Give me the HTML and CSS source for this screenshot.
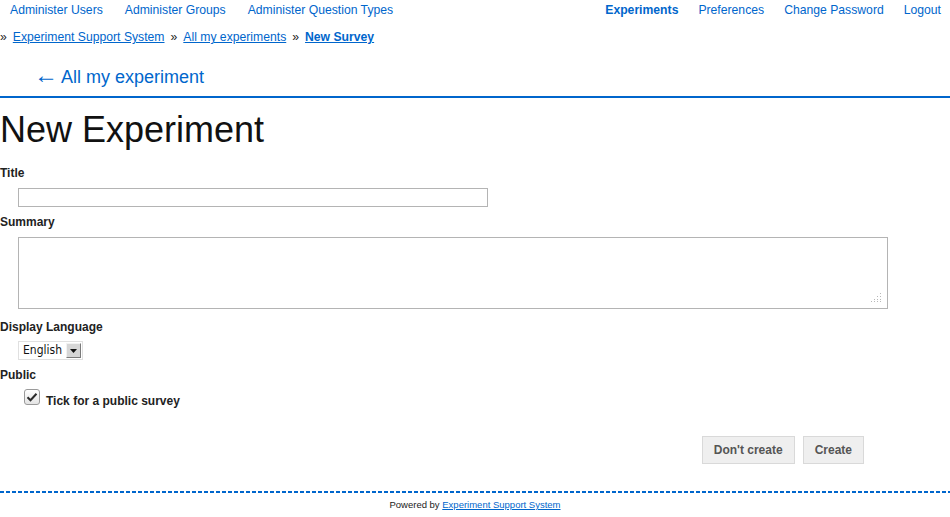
FILE: index.html
```html
<!DOCTYPE html>
<html lang="en">
<head>
<meta charset="utf-8">
<title>New Experiment</title>
<link rel="stylesheet" href="styles.css">
</head>
<body>
<header class="topnav">
  <nav class="nav-left">
    <a href="#">Administer Users</a>
    <a href="#">Administer Groups</a>
    <a href="#">Administer Question Types</a>
  </nav>
  <nav class="nav-right">
    <a href="#" class="current">Experiments</a>
    <a href="#">Preferences</a>
    <a href="#">Change Password</a>
    <a href="#">Logout</a>
  </nav>
</header>
<div class="crumbs">
  <span class="sep">»</span><a href="#">Experiment Support System</a>
  <span class="sep">»</span><a href="#">All my experiments</a>
  <span class="sep">»</span><a href="#" class="here">New Survey</a>
</div>
<div class="back"><div class="back-line"><a href="#"><span class="arrow">←</span> All my experiment</a></div></div>
<main class="content">
  <h1>New Experiment</h1>
  <form class="form">
    <label class="lbl">Title</label>
    <input class="text-input" type="text">
    <label class="lbl lbl-sum">Summary</label>
    <div class="ta-wrap">
      <textarea class="ta"></textarea>
      <svg class="grip" width="12" height="9" viewBox="0 0 12 9"><g fill="#b8b8b8"><rect x="10" y="0" width="1" height="1"/><rect x="7" y="3" width="1" height="1"/><rect x="10" y="3" width="1" height="1"/><rect x="4" y="6" width="1" height="1"/><rect x="7" y="6" width="1" height="1"/><rect x="10" y="6" width="1" height="1"/><rect x="1" y="8" width="1" height="1"/><rect x="4" y="8" width="1" height="1"/><rect x="7" y="8" width="1" height="1"/><rect x="10" y="8" width="1" height="1"/></g></svg>
    </div>
    <label class="lbl lbl-lang">Display Language</label>
    <div class="select">
      <span class="select-text">English</span>
      <span class="select-btn"><svg width="7" height="4" viewBox="0 0 7 4"><path d="M0 0h7L3.5 4z" fill="#111"/></svg></span>
    </div>
    <label class="lbl lbl-pub">Public</label>
    <div class="check-row">
      <span class="check"><svg width="16" height="16" viewBox="0 0 16 16"><path d="M3.5 8.2l3 3 6-6.5" fill="none" stroke="#2b2b2b" stroke-width="2"/></svg></span>
      <span class="check-label">Tick for a public survey</span>
    </div>
    <div class="actions">
      <button type="button" class="btn">Don't create</button>
      <button type="button" class="btn">Create</button>
    </div>
  </form>
</main>
<footer class="footer">
  <div class="rule"></div>
  <p class="powered">Powered by <a href="#">Experiment Support System</a></p>
</footer>
</body>
</html>
```
FILE: styles.css
```css
html, body {
  margin: 0;
  padding: 0;
  background: #fff;
}
body {
  font-family: "Liberation Sans", Arial, sans-serif;
  color: #222;
}
a {
  color: #0066cc;
}
.topnav {
  display: flex;
  justify-content: space-between;
  height: 20px;
  line-height: 20px;
  font-size: 12.2px;
}
.topnav a {
  text-decoration: none;
}
.nav-left {
  display: flex;
  gap: 22px;
  padding-left: 10px;
}
.nav-right {
  display: flex;
  gap: 20px;
  padding-right: 9px;
}
.nav-right .current {
  font-weight: bold;
}
.crumbs {
  display: flex;
  gap: 6px;
  margin-top: 10px;
  font-size: 12.2px;
  line-height: 14px;
  color: #222;
}
.crumbs .here {
  font-weight: bold;
}
.back {
  margin-top: 22px;
  padding: 0 0 7px 37px;
  border-bottom: 2px solid #0066cc;
}
.back-line {
  height: 23px;
  font-size: 18px;
  line-height: 23px;
}
.back a {
  text-decoration: none;
}
.back .arrow {
  display: inline-block;
  margin-left: -3px;
  margin-right: -1px;
  font-size: 24px;
  line-height: 0;
}
.content h1 {
  margin: 11px 0 0 0;
  font-size: 36px;
  line-height: 42px;
  font-weight: normal;
  color: #111;
}
.form {
  display: flex;
  flex-direction: column;
  align-items: flex-start;
}
.lbl {
  display: block;
  margin-top: 15px;
  font-size: 12px;
  line-height: 14px;
  font-weight: bold;
  color: #222;
}
.lbl-sum {
  margin-top: 8px;
}
.lbl-lang {
  margin-top: 11px;
}
.lbl-pub {
  margin-top: 8px;
}
.text-input {
  display: block;
  box-sizing: border-box;
  width: 470px;
  height: 19px;
  margin: 8px 0 0 18px;
  padding: 0 3px;
  border: 1px solid #b4b4b4;
  background: #fff;
}
.ta-wrap {
  position: relative;
  margin: 8px 0 0 18px;
}
.ta {
  display: block;
  box-sizing: border-box;
  width: 870px;
  height: 72px;
  margin: 0;
  border: 1px solid #b4b4b4;
  resize: none;
  background: #fff;
}
.grip {
  position: absolute;
  right: 6px;
  bottom: 7px;
}
.select {
  display: flex;
  align-items: center;
  box-sizing: border-box;
  width: 65px;
  height: 19px;
  margin: 7px 0 0 18px;
  border: 1px solid #e0e0e0;
  background: #fff;
}
.select-text {
  flex: 1;
  padding-left: 4px;
  font-family: "DejaVu Sans Condensed", "DejaVu Sans", sans-serif;
  font-stretch: condensed;
  font-size: 12px;
  line-height: 17px;
  color: #111;
}
.select-btn {
  display: flex;
  align-items: center;
  justify-content: center;
  box-sizing: border-box;
  width: 15px;
  height: 15px;
  margin-right: 1px;
  background: #d6d6d6;
  border: 1px solid;
  border-color: #f2f2f2 #7a7a7a #7a7a7a #f2f2f2;
}
.check-row {
  display: flex;
  align-items: flex-start;
  gap: 6px;
  margin: 7px 0 0 24px;
}
.check {
  display: block;
  box-sizing: border-box;
  width: 16px;
  height: 16px;
  border: 1px solid #9a9a9a;
  border-radius: 3px;
  background: linear-gradient(#ffffff, #e4e4e4);
}
.check svg {
  display: block;
  margin: -1px 0 0 -1px;
}
.check-label {
  margin-top: 5px;
  font-size: 12px;
  line-height: 14px;
  font-weight: bold;
  color: #222;
}
.actions {
  display: flex;
  gap: 8px;
  align-self: stretch;
  justify-content: flex-end;
  margin-top: 28px;
  padding-right: 86px;
}
.btn {
  box-sizing: border-box;
  height: 28px;
  padding: 0 11px;
  border: 1px solid #d9d9d9;
  background: #efefef;
  font-family: "Liberation Sans", Arial, sans-serif;
  font-size: 12px;
  font-weight: bold;
  color: #555;
}
.footer {
  margin-top: 27px;
}
.rule {
  height: 2px;
  background: repeating-linear-gradient(90deg, #0066cc 0 4px, transparent 4px 6px);
}
.powered {
  margin: 5px 0 0 0;
  text-align: center;
  font-size: 9.5px;
  line-height: 14px;
  color: #222;
}
```
